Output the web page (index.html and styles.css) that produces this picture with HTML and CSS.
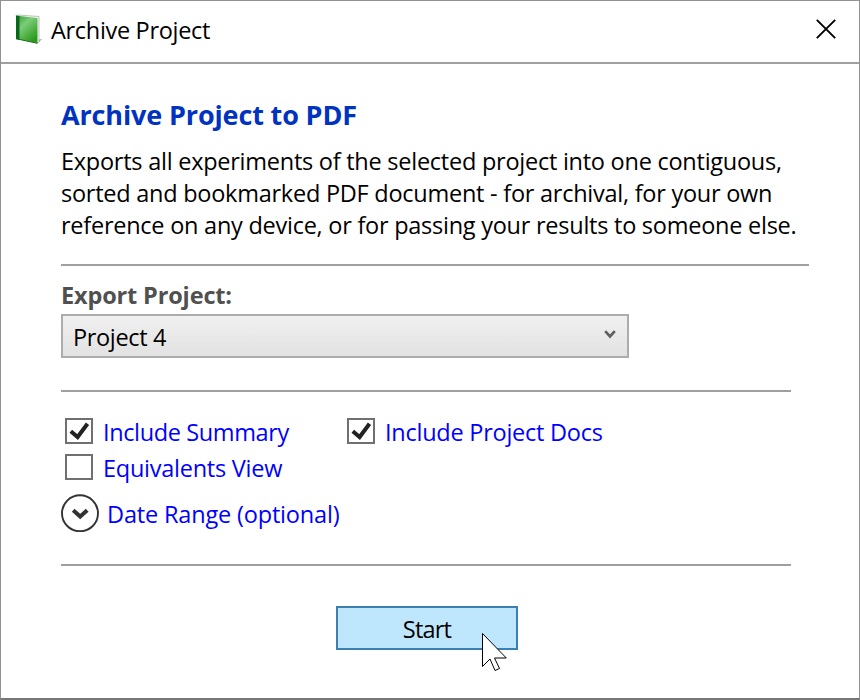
FILE: index.html
```html
<!DOCTYPE html>
<html lang="en">
<head>
<meta charset="utf-8">
<title>Archive Project</title>
<link rel="stylesheet" href="styles.css">
</head>
<body>
<div class="window">
  <header class="titlebar">
    <svg class="book" width="28" height="32" viewBox="0 0 28 32">
      <defs>
        <linearGradient id="cover" x1="0" y1="0" x2="0.6" y2="1">
          <stop offset="0" stop-color="#3fa545"/><stop offset=".35" stop-color="#7ccd78"/><stop offset="1" stop-color="#2a9a1c"/>
        </linearGradient>
      </defs>
      <path d="M22 26l5-1-4 4z" fill="#999"/>
      <path d="M1 1.500L3 1l21 1.500V27.500L22 29.500z" fill="#f4f6f4" stroke="#9ab09a" stroke-width=".7"/>
      <path d="M1 1.500L5 2v24L1 25z" fill="#07681a"/>
      <path d="M4.500 2l18 2v25l-18-3.500z" fill="url(#cover)"/>
      <path d="M1 24.700l21.500 4.600" stroke="#176c17" fill="none"/>
    </svg>
    <h1 class="title">Archive Project</h1>
    <svg class="close" width="20" height="20" viewBox="0 0 20 20"><path d="M.8.8l18.400 18.400M19.200.8L.8 19.200" stroke="#000" stroke-width="1.900"/></svg>
  </header>
  <main class="content">
    <h2 class="heading">Archive Project to PDF</h2>
    <p class="intro">Exports all experiments of the selected project into one contiguous,<br>sorted and bookmarked PDF document - for archival, for your own<br>reference on any device, or for passing your results to someone else.</p>
    <hr class="rule rule-wide">
    <div class="label">Export Project:</div>
    <div class="select"><span>Project 4</span>
      <svg width="12" height="10" viewBox="0 0 12 10"><path d="M1.200 1.200L6 6.500l4.800-5.300" fill="none" stroke="#606060" stroke-width="2.700"/></svg>
    </div>
    <hr class="rule">
    <div class="options">
      <div class="option"><i class="box"><svg width="24" height="22" viewBox="0 0 24 22"><path d="M3.800 11.300l6.800 5.700L20.500 3.800" fill="none" stroke="#222" stroke-width="4"/></svg></i><span class="summary">Include Summary</span></div>
      <div class="option"><i class="box"><svg width="24" height="22" viewBox="0 0 24 22"><path d="M3.800 11.300l6.800 5.700L20.500 3.800" fill="none" stroke="#222" stroke-width="4"/></svg></i><span>Include Project Docs</span></div>
      <div class="option"><i class="box"></i><span>Equivalents View</span></div>
    </div>
    <div class="range">
      <svg width="38" height="38" viewBox="0 0 38 38"><circle cx="19" cy="19.300" r="18" fill="none" stroke="#333" stroke-width="1.900"/><path d="M12.200 16.200l7 6.300 7-6.300" fill="none" stroke="#333" stroke-width="4"/></svg>
      <span>Date Range (optional)</span>
    </div>
    <hr class="rule">
    <button class="start">Start</button>
  </main>
  <svg class="cursor" width="28" height="42" viewBox="0 0 28 42"><path d="M1.500 1.500v33l7.500-7.500L14 38.500l4.500-2L13.500 26h11.800z" fill="#fff" stroke="#000"/></svg>
</div>
</body>
</html>
```
FILE: styles.css
```css
* { box-sizing: border-box; margin: 0; }
body { background: #fff; font: 23.5px/32px "Open Sans", sans-serif; letter-spacing: -.25px; color: #000; }
.window { position: relative; width: 860px; height: 700px; border: 1px solid #929292; border-bottom: 2px solid #777; }
.titlebar { display: flex; height: 63px; border-bottom: 2px solid #9f9f9f; padding-left: 14px; }
.book { margin: 13px 8px 0 0; }
.title { font-size: 23.5px; font-weight: 400; line-height: 59px; letter-spacing: -.31px; white-space: nowrap; }
.close { margin: 18px 23px 0 auto; }
.content { display: flex; flex-direction: column; align-items: flex-start; padding: 35px 50px 0 60px; white-space: nowrap; }
.heading { font-size: 27px; font-weight: 700; letter-spacing: -.14px; color: #0033c0; }
.intro { margin-top: 14px; }
.rule { width: 730px; height: 2px; border: 0; background: #9f9f9f; }
.rule-wide { width: 748px; margin: 23px 0 13px; }
.label { font-weight: 700; letter-spacing: -.15px; color: #505050; }
.select { display: flex; justify-content: space-between; width: 568px; height: 44px; margin: 3px 0 32px; padding: 5px 11px 0 10px; border: 2px solid #acacac; background: linear-gradient(#f0f0f0, #e2e2e2); letter-spacing: -.35px; }
.select svg { margin-top: 9px; }
.options { display: grid; grid-template-columns: 282px auto; grid-auto-rows: 36px; padding: 21px 0 0 4px; }
.option { display: flex; align-items: center; gap: 10px; color: #00f; }
.option span { padding-top: 1px; }
.option .summary { letter-spacing: -.37px; }
.box { display: block; width: 28px; height: 26px; border: 2px solid #707070; }
.box svg { display: block; }
.range { display: flex; align-items: center; gap: 8px; margin: 9px 0 32px; letter-spacing: -.17px; color: #00f; }
.range span { padding-top: 2px; }
.start { width: 182px; height: 44px; margin: 40px 0 0 275px; padding: 2px 0 0; border: 2px solid #3c7fb1; background: #bee6fd; font: inherit; letter-spacing: -.8px; }
.cursor { position: absolute; left: 480px; top: 631px; }
```
